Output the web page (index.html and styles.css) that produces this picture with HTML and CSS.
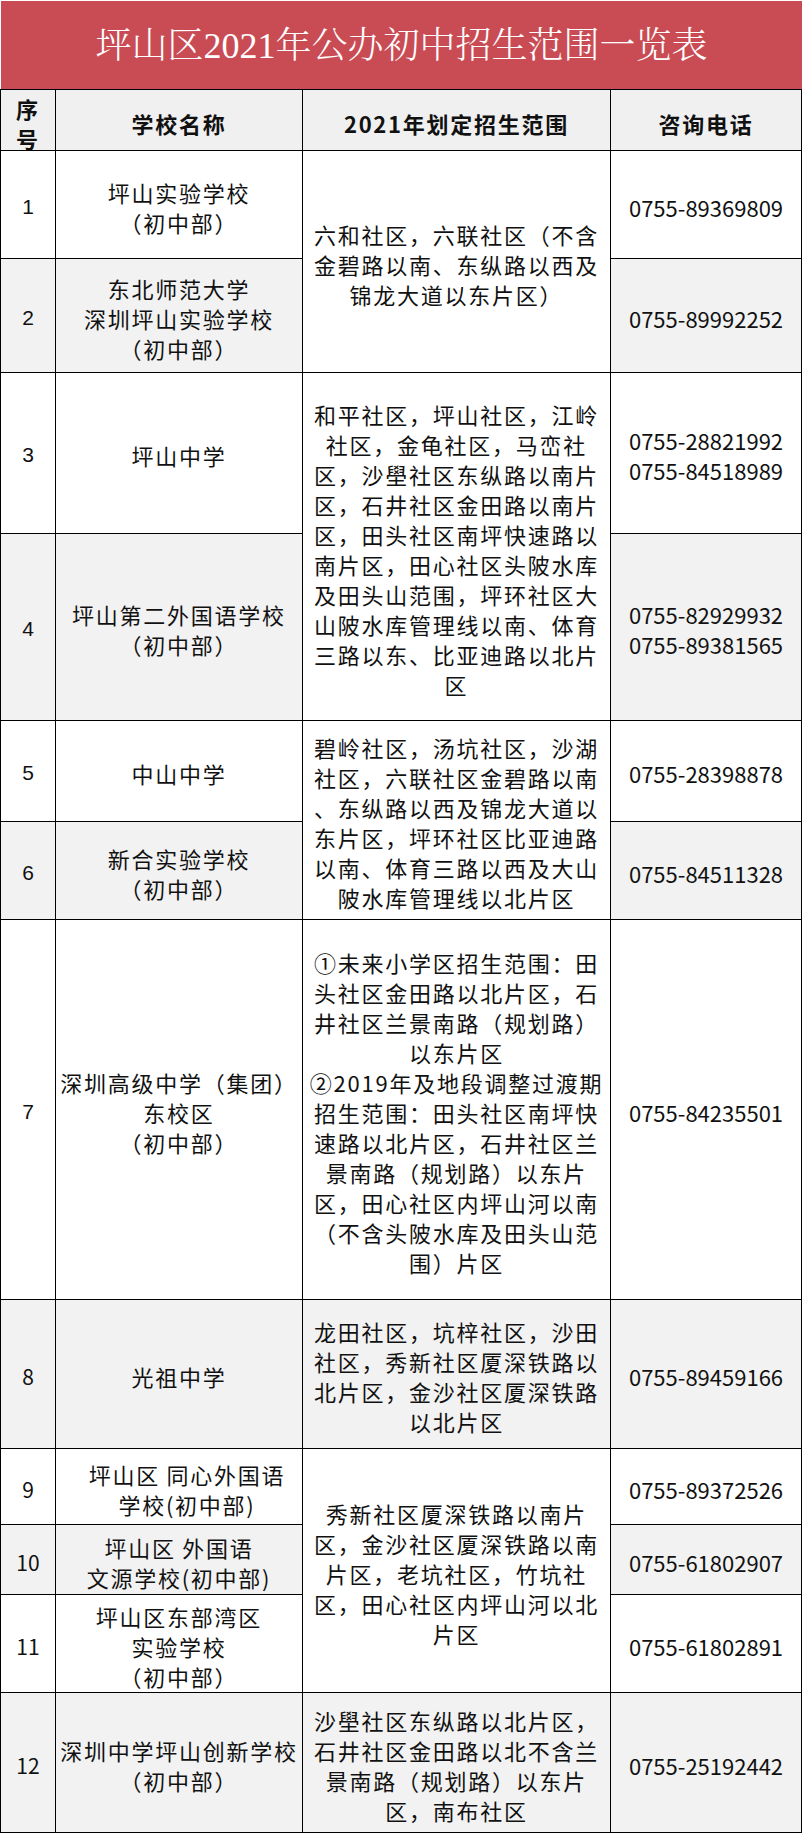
FILE: index.html
```html
<!DOCTYPE html>
<html lang="zh-CN">
<head>
<meta charset="utf-8">
<title>坪山区2021年公办初中招生范围一览表</title>
<link rel="stylesheet" href="styles.css">
</head>
<body>
<div class="page">
  <h1 class="title">坪山区2021年公办初中招生范围一览表</h1>
  <div class="sheet">
    <div class="cell head">序<br>号</div>
    <div class="cell head">学校名称</div>
    <div class="cell head">2021年划定招生范围</div>
    <div class="cell head">咨询电话</div>

    <div class="cell num">1</div>
    <div class="cell">坪山实验学校<br>（初中部）</div>
    <div class="cell span2">六和社区，六联社区（不含<br>金碧路以南、东纵路以西及<br>锦龙大道以东片区）</div>
    <div class="cell phone">0755-89369809</div>

    <div class="cell num alt">2</div>
    <div class="cell alt">东北师范大学<br>深圳坪山实验学校<br>（初中部）</div>
    <div class="cell phone alt">0755-89992252</div>

    <div class="cell num">3</div>
    <div class="cell">坪山中学</div>
    <div class="cell span2">和平社区，坪山社区，江岭<br>社区，金龟社区，马峦社<br>区，沙壆社区东纵路以南片<br>区，石井社区金田路以南片<br>区，田头社区南坪快速路以<br>南片区，田心社区头陂水库<br>及田头山范围，坪环社区大<br>山陂水库管理线以南、体育<br>三路以东、比亚迪路以北片<br>区</div>
    <div class="cell phone">0755-28821992<br>0755-84518989</div>

    <div class="cell num alt">4</div>
    <div class="cell alt">坪山第二外国语学校<br>（初中部）</div>
    <div class="cell phone alt">0755-82929932<br>0755-89381565</div>

    <div class="cell num">5</div>
    <div class="cell">中山中学</div>
    <div class="cell span2">碧岭社区，汤坑社区，沙湖<br>社区，六联社区金碧路以南<br>、东纵路以西及锦龙大道以<br>东片区，坪环社区比亚迪路<br>以南、体育三路以西及大山<br>陂水库管理线以北片区</div>
    <div class="cell phone">0755-28398878</div>

    <div class="cell num alt">6</div>
    <div class="cell alt">新合实验学校<br>（初中部）</div>
    <div class="cell phone alt">0755-84511328</div>

    <div class="cell num">7</div>
    <div class="cell">深圳高级中学（集团）<br>东校区<br>（初中部）</div>
    <div class="cell">①未来小学区招生范围：田<br>头社区金田路以北片区，石<br>井社区兰景南路（规划路）<br>以东片区<br>②2019年及地段调整过渡期<br>招生范围：田头社区南坪快<br>速路以北片区，石井社区兰<br>景南路（规划路）以东片<br>区，田心社区内坪山河以南<br>（不含头陂水库及田头山范<br>围）片区</div>
    <div class="cell phone">0755-84235501</div>

    <div class="cell num num-cjk alt">8</div>
    <div class="cell alt">光祖中学</div>
    <div class="cell alt">龙田社区，坑梓社区，沙田<br>社区，秀新社区厦深铁路以<br>北片区，金沙社区厦深铁路<br>以北片区</div>
    <div class="cell phone alt">0755-89459166</div>

    <div class="cell num num-cjk">9</div>
    <div class="cell shifted">坪山区 同心外国语<br>学校(初中部)</div>
    <div class="cell span3">秀新社区厦深铁路以南片<br>区，金沙社区厦深铁路以南<br>片区，老坑社区，竹坑社<br>区，田心社区内坪山河以北<br>片区</div>
    <div class="cell phone">0755-89372526</div>

    <div class="cell num num-cjk alt">10</div>
    <div class="cell alt">坪山区 外国语<br>文源学校(初中部)</div>
    <div class="cell phone alt">0755-61802907</div>

    <div class="cell num num-cjk">11</div>
    <div class="cell">坪山区东部湾区<br>实验学校<br>（初中部）</div>
    <div class="cell phone">0755-61802891</div>

    <div class="cell num num-cjk alt">12</div>
    <div class="cell alt">深圳中学坪山创新学校<br>（初中部）</div>
    <div class="cell alt">沙壆社区东纵路以北片区，<br>石井社区金田路以北不含兰<br>景南路（规划路）以东片<br>区，南布社区</div>
    <div class="cell phone alt">0755-25192442</div>
  </div>
</div>
</body>
</html>
```

FILE: styles.css
```css
html, body {
  margin: 0;
  padding: 0;
  background: #ffffff;
}

.page {
  width: 802px;
  font-family: "Noto Sans CJK SC", sans-serif;
  color: #111111;
}

.title {
  margin: 1px 0 0 1px;
  height: 88px;
  background: #c94c55;
  color: #ffffff;
  font-family: "Liberation Serif", "Noto Serif CJK SC", "Noto Sans CJK SC", serif;
  font-weight: 300;
  font-size: 36px;
  line-height: 90px;
  text-align: center;
  white-space: nowrap;
}

.sheet {
  display: grid;
  grid-template-columns: 55px 247px 308px 191px;
  grid-template-rows: 61px 108px 114px 161px 187px 101px 98px 380px 149px 76px 70px 98px 140px;
  border-left: 1px solid #000;
  border-top: 1px solid #000;
}

.cell {
  box-sizing: border-box;
  display: flex;
  align-items: center;
  justify-content: center;
  text-align: center;
  white-space: nowrap;
  padding-top: 4px;
  border-right: 1px solid #000;
  border-bottom: 1px solid #000;
  background: #ffffff;
  font-size: 22px;
  line-height: 30px;
  letter-spacing: 1.75px;
}

.alt {
  background: #f2f2f2;
}

.head {
  background: #f0f0f0;
  font-weight: bold;
  line-height: 30px;
  padding-top: 6px;
}

.span2 {
  grid-row: span 2;
}

.span3 {
  grid-row: span 3;
}

.num {
  font-family: "Liberation Sans", sans-serif;
  font-size: 21px;
  letter-spacing: 0;
}

.num-cjk {
  font-family: "Noto Sans CJK SC", sans-serif;
}

.phone {
  letter-spacing: 0;
  font-size: 22px;
}

.shifted {
  padding-left: 16px;
}
```
